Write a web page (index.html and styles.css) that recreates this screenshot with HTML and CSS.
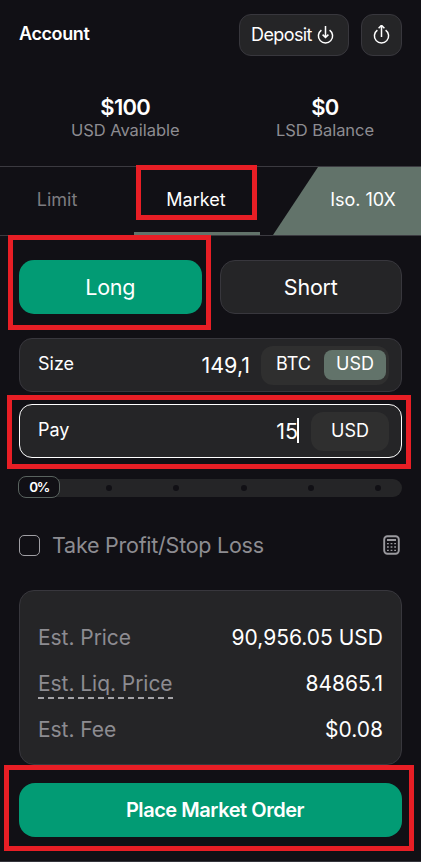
FILE: index.html
```html
<!DOCTYPE html>
<html lang="en">
<head>
    <meta charset="UTF-8">
    <meta name="viewport" content="width=device-width, initial-scale=1.0">
    <title>Trade</title>
    <link rel="stylesheet" href="styles.css">
</head>
<body>
    <header>
        <h1>Account</h1>
        <button type="button" class="btn deposit-btn">
            <span>Deposit</span>
            <svg width="17" height="20" viewBox="0 0 17 20" fill="none" stroke="#fff" stroke-width="1.5">
                <path d="M4.4 5.1a7.1 7.1 0 1 0 8.2 0"/>
                <path d="M8.5 1v11M5.6 9.6l2.9 2.9 2.9-2.9"/>
            </svg>
        </button>
        <button type="button" class="btn share-btn" aria-label="Withdraw">
            <svg width="17" height="20" viewBox="0 0 17 20" fill="none" stroke="#fff" stroke-width="1.5">
                <path d="M4.4 5.1a7.1 7.1 0 1 0 8.2 0"/>
                <path d="M8.5 12V.8M5.6 3.2L8.5.3l2.9 2.9"/>
            </svg>
        </button>
    </header>

    <section class="balances">
        <div class="balance">
            <strong>$100</strong>
            <span>USD Available</span>
        </div>
        <div class="balance">
            <strong>$0</strong>
            <span>LSD Balance</span>
        </div>
    </section>

    <nav class="tabs">
        <a class="tab tab-limit">Limit</a>
        <a class="tab tab-market marked">Market</a>
        <a class="tab tab-leverage">Iso. 10X</a>
    </nav>

    <main>
        <div class="sides">
            <div class="side-wrap marked mark-long">
                <button type="button" class="side long">Long</button>
            </div>
            <div class="side-wrap">
                <button type="button" class="side short">Short</button>
            </div>
        </div>

        <div class="field">
            <span class="label">Size</span>
            <span class="value size-value">149,1</span>
            <div class="units">
                <span class="unit">BTC</span>
                <span class="unit selected">USD</span>
            </div>
        </div>

        <div class="field focused marked mark-pay">
            <span class="label">Pay</span>
            <span class="value">15<i class="caret"></i></span>
            <div class="units single">
                <span>USD</span>
            </div>
        </div>

        <div class="slider">
            <span class="thumb">0%</span>
            <i class="dot"></i>
            <i class="dot"></i>
            <i class="dot"></i>
            <i class="dot"></i>
            <i class="dot"></i>
        </div>

        <div class="options">
            <span class="checkbox"></span>
            <span class="option-text">Take Profit/Stop Loss</span>
            <svg width="17" height="20" viewBox="0 0 17 20" fill="none" stroke="#9b9a9f">
                <rect x="1.2" y="1.2" width="14.6" height="17.6" rx="3.2" stroke-width="1.9"/>
                <path d="M4 5h9" stroke-width="2"/>
                <path d="M4 8.7h9M4 12h9M4 15.3h9" stroke-width="1.3" stroke-dasharray="1.8"/>
            </svg>
        </div>

        <div class="summary">
            <div class="row">
                <span>Est. Price</span>
                <b>90,956.05 USD</b>
            </div>
            <div class="row">
                <span class="hint">Est. Liq. Price</span>
                <b>84865.1</b>
            </div>
            <div class="row">
                <span>Est. Fee</span>
                <b>$0.08</b>
            </div>
        </div>

        <div class="marked mark-order">
            <button type="button" class="order-btn">Place Market Order</button>
        </div>
    </main>
</body>
</html>
```
FILE: styles.css
```css
/* General Styles */
* {
    box-sizing: border-box;
}
body {
    font-family: Inter, "Liberation Sans", sans-serif;
    background-color: #111015;
    color: #fff;
    margin: 0;
    height: 862px;
    border-bottom: 1px solid #35343c;
    overflow: hidden;
}
button {
    font-family: inherit;
    color: inherit;
    padding: 0;
    cursor: pointer;
}
svg {
    flex: none;
}
/* Header */
header {
    display: flex;
    align-items: center;
    gap: 12px;
    padding: 14px 19px 0;
    height: 56px;
}
h1 {
    flex: 1;
    margin: 0;
    font-size: 18px;
    line-height: 40px;
    padding-bottom: 2px;
    font-weight: 600;
    letter-spacing: -0.4px;
}
.btn {
    display: flex;
    align-items: center;
    justify-content: center;
    gap: 5px;
    height: 42px;
    background: #252527;
    border: 1px solid #38373d;
    border-radius: 12px;
    font-size: 18px;
    letter-spacing: -0.6px;
}
.deposit-btn {
    width: 110px;
    padding-right: 3px;
}
.deposit-btn span {
    padding-bottom: 2px;
}
.share-btn {
    width: 41px;
}
/* Balances */
.balances {
    display: flex;
    justify-content: space-between;
    padding: 38px 47px 0 71px;
    height: 110px;
}
.balance {
    display: flex;
    flex-direction: column;
    align-items: center;
}
.balance strong {
    font-size: 22px;
    line-height: 26px;
    font-weight: 600;
    letter-spacing: -0.7px;
}
.balance span {
    font-size: 16.5px;
    line-height: 20px;
    letter-spacing: -0.05px;
    color: #8d8c91;
}
/* Tabs */
.tabs {
    display: flex;
    height: 70px;
    border-top: 1px solid #3b3a40;
    border-bottom: 1px solid #3b3a40;
    font-size: 18px;
}
.tab {
    display: flex;
    align-items: center;
    justify-content: center;
    padding-bottom: 3px;
}
.tab-limit {
    width: 114px;
    margin-right: 20px;
    color: #7d7c80;
}
.tab-market {
    width: 126px;
    border-bottom: 3px solid #62736a;
    padding: 0 2px 0 0;
}
.tab-leverage {
    flex: 1;
    margin-left: 13px;
    padding-left: 32px;
    background: #62736a;
    clip-path: polygon(45px 0, 100% 0, 100% 100%, 0 100%);
}
/* Red markers */
.marked {
    position: relative;
}
.marked::after {
    content: "";
    position: absolute;
    inset: -2px 3px 12px 2px;
    border: 5px solid #e81e25;
    pointer-events: none;
}
.mark-long::after {
    inset: -25px -9px -16px -11px;
}
.mark-pay::after {
    inset: -10px -10px -12px -13px;
}
.mark-order::after {
    inset: -18px -12px -14px -15px;
}
/* Order form */
main {
    padding: 24px 19px 0;
}
.sides {
    display: flex;
    gap: 18px;
    margin-bottom: 24px;
}
.side-wrap {
    flex: 1;
}
.side {
    display: block;
    width: 100%;
    height: 54px;
    padding-bottom: 1px;
    border-radius: 15px;
    font-size: 21.5px;
    letter-spacing: -0.2px;
}
.long {
    background: #029b74;
    border: none;
}
.short {
    background: #252527;
    border: 1px solid #38373d;
}
.field {
    display: flex;
    align-items: center;
    height: 54px;
    margin-bottom: 12px;
    padding: 0 12px 0 18px;
    background: #252527;
    border: 1px solid #38373d;
    border-radius: 13px;
}
.focused {
    border-color: #fff;
}
.label {
    flex: 1;
    font-size: 18px;
    line-height: 22px;
    padding-bottom: 2px;
}
.value {
    display: flex;
    align-items: center;
    margin-right: 12px;
    padding-bottom: 1px;
    font-size: 21.5px;
}
.size-value {
    margin-right: 11px;
}
.caret {
    width: 2px;
    height: 25px;
    margin-left: -1px;
    background: #fff;
}
.units {
    display: flex;
    align-items: center;
    justify-content: space-between;
    width: 128px;
    height: 39px;
    padding: 0 3px 0 15px;
    background: #2f2f2f;
    border-radius: 12px;
    font-size: 18px;
}
.single {
    width: 78px;
    justify-content: center;
    padding: 0 0 2px;
}
.unit {
    line-height: 28px;
    padding-bottom: 2px;
}
.selected {
    width: 62px;
    height: 30px;
    text-align: center;
    background: #62736a;
    border-radius: 8px;
}
/* Slider */
.slider {
    display: flex;
    align-items: center;
    height: 18px;
    margin-top: 21px;
    padding-right: 21px;
    justify-content: space-between;
    background: #252527;
    border-radius: 9px;
}
.thumb {
    width: 42px;
    height: 22px;
    margin: 0 -15px 2px -1px;
    background: #111015;
    border: 1px solid #59635f;
    border-radius: 8px;
    font-size: 13.5px;
    line-height: 21px;
    font-weight: 600;
    letter-spacing: -1.6px;
    text-align: center;
}
.dot {
    width: 6px;
    height: 6px;
    border-radius: 50%;
    background: #111015;
}
/* Take profit row */
.options {
    display: flex;
    align-items: center;
    height: 30px;
    margin-top: 33px;
    padding-right: 2px;
    color: #8d8c91;
}
.checkbox {
    width: 21px;
    height: 21px;
    border: 1px solid #a09fa4;
    border-radius: 5px;
}
.option-text {
    flex: 1;
    margin-left: 12px;
    font-size: 21.5px;
    letter-spacing: -0.25px;
}
/* Summary */
.summary {
    height: 175px;
    margin-top: 30px;
    padding: 24px 18px;
    background: #252527;
    border: 1px solid #38373d;
    border-radius: 15px;
}
.row {
    display: flex;
    align-items: center;
    justify-content: space-between;
    height: 46px;
    font-size: 21px;
    line-height: 26px;
}
.row span {
    color: #8d8c91;
    letter-spacing: -0.05px;
}
.row b {
    font-weight: 400;
}
.row .hint {
    background: repeating-linear-gradient(90deg, #a3a2a6 0 6px, transparent 6px 10px) left bottom / 100% 2px no-repeat;
    padding-bottom: 2px;
    margin-bottom: -2px;
}
/* Submit */
.mark-order {
    margin-top: 18px;
}
.order-btn {
    display: block;
    width: 100%;
    height: 54px;
    padding: 0 0 1px 9px;
    border: none;
    border-radius: 16px;
    background: #029b74;
    font-size: 20px;
    font-weight: 600;
    letter-spacing: -0.45px;
}
```
